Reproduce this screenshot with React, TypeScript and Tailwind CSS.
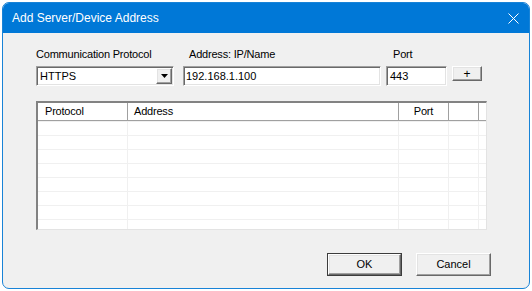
import React from "react";

const sunken =
  "border border-t-[#a0a0a0] border-l-[#a0a0a0] border-r-white border-b-white shadow-[inset_1px_1px_0_#696969,inset_-1px_-1px_0_#e3e3e3] bg-white";
const raised =
  "border border-t-white border-l-white border-r-[#696969] border-b-[#696969] shadow-[inset_-1px_-1px_0_#a0a0a0,inset_1px_1px_0_#e3e3e3] bg-[#f0f0f0]";

export default function App() {
  const rows = Array.from({ length: 8 });
  return (
    <div
      className="w-[532px] h-[291px] bg-white p-[2px] text-black"
      style={{ fontFamily: '"Liberation Sans", Arial, sans-serif' }}
    >
      <div className="h-full flex flex-col border border-[#1883d7] rounded-[7px] overflow-hidden bg-[#f0f0f0]">
        {/* Title bar */}
        <div className="h-[30px] bg-[#0078d7] flex items-center justify-between pl-[9px] pr-[9px] shrink-0">
          <span className="text-white text-[12px] leading-none">Add Server/Device Address</span>
          <svg width="11" height="11" viewBox="0 0 11 11" className="mr-[1px]">
            <path d="M0.5 0.5 L10.5 10.5 M10.5 0.5 L0.5 10.5" stroke="white" strokeWidth="1" fill="none" />
          </svg>
        </div>

        {/* Body */}
        <div className="flex-1 flex flex-col pl-[33px] pt-[15px] text-[11px] tracking-[-0.2px]">
          <div className="flex items-end">
            <div className="flex flex-col w-[138px]">
              <span className="h-[13px] leading-[13px]">Communication Protocol</span>
              <div className={`${sunken} mt-[5px] h-[20px] flex items-center justify-between pl-[3px] pr-[1px]`}>
                <span className="tracking-normal">HTTPS</span>
                <div className={`${raised} w-[16px] h-[16px] flex items-center justify-center`}>
                  <svg width="7" height="4" viewBox="0 0 7 4">
                    <path d="M0 0 H7 L3.5 4 Z" fill="black" />
                  </svg>
                </div>
              </div>
            </div>
            <div className="flex flex-col w-[198px] ml-[9px]">
              <span className="h-[13px] leading-[13px] pl-[6px]">Address: IP/Name</span>
              <div className={`${sunken} mt-[5px] h-[20px] flex items-center pl-[2px]`}>
                <span className="tracking-normal">192.168.1.100</span>
              </div>
            </div>
            <div className="flex flex-col w-[61px] ml-[5px]">
              <span className="h-[13px] leading-[13px] pl-[7px]">Port</span>
              <div className={`${sunken} mt-[5px] h-[20px] flex items-center pl-[3px]`}>
                <span className="tracking-normal">443</span>
              </div>
            </div>
            <div className={`${raised} ml-[5px] mb-[5px] w-[30px] h-[15px] flex items-center justify-center text-[12px] leading-none`}>
              +
            </div>
          </div>

          {/* List view */}
          <div className="mt-[15px] w-[451px] h-[129px] border-t-2 border-l-2 border-t-[#828282] border-l-[#828282] border-r border-b border-r-[#e3e3e3] border-b-[#e3e3e3] bg-white flex flex-col overflow-hidden">
            <div className="h-[18px] shrink-0 flex border-b border-[#a0a0a0] leading-[16px]">
              <div className="w-[90px] pl-[7px] border-r border-[#a0a0a0]">Protocol</div>
              <div className="w-[271px] pl-[6px] border-r border-[#a0a0a0]">Address</div>
              <div className="w-[50px] text-center border-r border-[#a0a0a0]">Port</div>
              <div className="w-[30px] border-r border-[#a0a0a0]"></div>
              <div className="flex-1"></div>
            </div>
            {rows.map((_, i) => (
              <div key={i} className="h-[14px] shrink-0 flex border-t border-[#f0f0f0]">
                <div className="w-[90px] border-r border-[#f0f0f0]"></div>
                <div className="w-[271px] border-r border-[#f0f0f0]"></div>
                <div className="w-[50px] border-r border-[#f0f0f0]"></div>
                <div className="w-[30px] border-r border-[#f0f0f0]"></div>
                <div className="flex-1"></div>
              </div>
            ))}
          </div>

          {/* Buttons */}
          <div className="mt-[23px] flex justify-end gap-[14px] pr-[38px]">
            <div className="w-[75px] h-[23px] border border-[#3c3c3c] flex">
              <div className={`${raised} flex-1 flex items-center justify-center tracking-normal`}>OK</div>
            </div>
            <div className={`${raised} w-[75px] h-[23px] flex items-center justify-center tracking-normal`}>
              Cancel
            </div>
          </div>
        </div>
      </div>
    </div>
  );
}
